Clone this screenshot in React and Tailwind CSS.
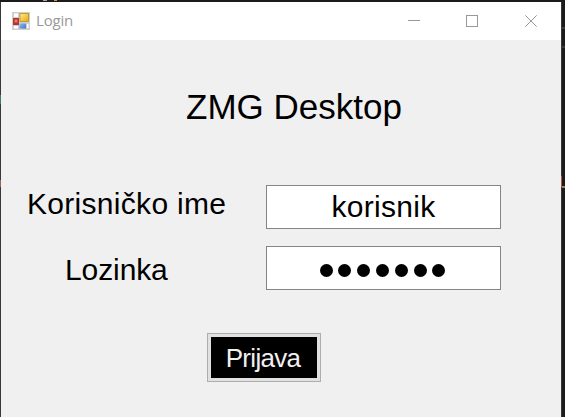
function FormIcon() {
  return (
    <svg width="18" height="18" viewBox="0 0 18 18" className="shrink-0" aria-hidden="true">
      <defs>
        <linearGradient id="gold" x1="0" y1="0" x2="1" y2="1">
          <stop offset="0" stopColor="#ffe88a" />
          <stop offset="1" stopColor="#e5ad13" />
        </linearGradient>
        <linearGradient id="blue" x1="0" y1="0" x2="1" y2="1">
          <stop offset="0" stopColor="#8fb8f5" />
          <stop offset="1" stopColor="#4272d2" />
        </linearGradient>
      </defs>
      <rect width="18" height="18" fill="#cfcfcf" />
      <rect x="2" y="1.5" width="4" height="3.5" fill="#fff" />
      <rect x="2" y="14" width="4" height="2.5" fill="#fff" />
      <rect x="15" y="12" width="1.5" height="4" fill="#fff" />
      <rect x="7.5" y="1" width="9.5" height="9" fill="#c59a2d" />
      <rect x="8.5" y="2" width="7.5" height="7" fill="url(#gold)" />
      <rect x="1" y="6" width="6" height="7" fill="#b5332b" />
      <rect x="2.5" y="7.5" width="3" height="3" fill="#dc7a70" />
      <rect x="7.5" y="11.5" width="6.5" height="5" fill="url(#blue)" />
    </svg>
  );
}

function TitleBar() {
  return (
    <header className="flex h-[38px] shrink-0 items-center bg-white pl-[11px] pr-[24px]">
      <FormIcon />
      <span className="ml-[6px] pb-[2px] font-['Open_Sans',sans-serif] text-[15px] leading-[20px] tracking-[-0.2px] text-[#999999]">
        Login
      </span>
      <div className="ml-auto flex items-center">
        <svg width="12" height="12" viewBox="0 0 12 12" stroke="#999" className="mr-[46px]" aria-hidden="true">
          <path d="M0 5.5H12" />
        </svg>
        <svg width="12" height="12" viewBox="0 0 12 12" fill="none" stroke="#999" className="mr-[47px]" aria-hidden="true">
          <rect x=".5" y=".5" width="11" height="11" />
        </svg>
        <svg width="12" height="12" viewBox="0 0 12 12" stroke="#999" aria-hidden="true">
          <path d="M.3 .3L11.7 11.7M11.7 .3L.3 11.7" />
        </svg>
      </div>
    </header>
  );
}

export default function App() {
  return (
    <div className="relative h-[417px] w-[565px] overflow-hidden bg-[#1c1a1c] pl-px pt-[2px] font-['Liberation_Sans',Arial,sans-serif] text-black">
      <i className="absolute left-[43px] top-0 h-px w-[4px] bg-[#b5a18e]" />
      <i className="absolute left-[54px] top-0 h-px w-[3px] bg-[#c59a45]" />
      <i className="absolute left-0 top-[2px] h-[415px] w-px bg-[#38363a]" />
      <i className="absolute left-0 top-[95px] h-[9px] w-px bg-[#3a7c74]" />
      <i className="absolute left-0 top-[180px] h-[7px] w-px bg-[#93665c]" />
      <i className="absolute left-[561px] top-[2px] h-[415px] w-px bg-[#38363a]" />
      <i className="absolute left-[562px] top-[27px] h-[2px] w-[3px] bg-[#39393b]" />
      <i className="absolute left-[562px] top-[46px] h-[2px] w-[3px] bg-[#39393b]" />
      <i className="absolute left-[561px] top-[176px] h-[11px] w-px bg-[#a75f43]" />
      <i className="absolute left-[562px] top-[186px] h-[2px] w-[3px] bg-[#b47961]" />
      <main className="flex h-[415px] w-[560px] flex-col bg-[#f0f0f0]">
        <TitleBar />
        <h1 className="ml-[185px] mt-[47px] whitespace-nowrap text-[35px] leading-[40px]">ZMG Desktop</h1>
        <form className="flex flex-col" onSubmit={(e) => e.preventDefault()}>
          <div className="mt-[58px] flex h-[44px] items-center">
            <label className="w-[265px] whitespace-nowrap pb-[7px] pl-[26px] text-[30px] leading-[34px] tracking-[0.3px]">
              Korisničko ime
            </label>
            <div className="flex h-[44px] w-[235px] items-center justify-center border border-[#858585] bg-white text-[30px] leading-[34px] tracking-[0.3px]">
              <span>korisnik</span>
            </div>
          </div>
          <div className="mt-[17px] flex h-[44px] items-center">
            <label className="w-[265px] whitespace-nowrap pl-[64px] pt-[3px] text-[30px] leading-[34px] tracking-[-0.1px]">
              Lozinka
            </label>
            <div className="flex h-[44px] w-[235px] items-center justify-center gap-[5.8px] border border-[#858585] bg-white pr-[2px] pt-[4px]">
              {Array.from({ length: 7 }, (_, i) => (
                <span key={i} className="size-[13px] rounded-full bg-black" />
              ))}
            </div>
          </div>
          <button className="ml-[206px] mt-[43px] flex h-[49px] w-[114px] border border-[#adadad] bg-[#e1e1e1] p-[3px]">
            <span className="flex h-full w-full items-center justify-center bg-black pr-[2px] text-[26px] leading-[30px] tracking-[-0.7px] text-[#f0f0f0]">
              Prijava
            </span>
          </button>
        </form>
      </main>
    </div>
  );
}
